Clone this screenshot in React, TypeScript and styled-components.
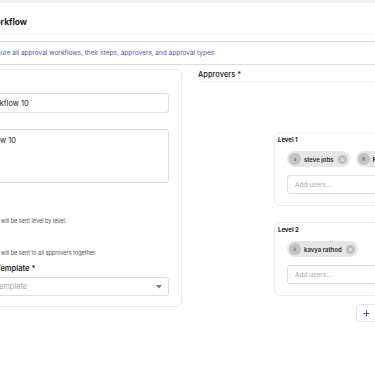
import styled, { createGlobalStyle } from "styled-components";

const GlobalStyle = createGlobalStyle`
  * { box-sizing: border-box; }
  html, body { margin: 0; padding: 0; background: #ffffff; }
  body {
    font-family: Inter, "Noto Sans", sans-serif;
    color: #1f1f1f;
  }
`;

// the screenshot only shows a slice of a wider page
const Viewport = styled.div`
  width: 375px;
  height: 366px;
  overflow: hidden;
`;

const Page = styled.div`
  width: 656px;
  margin-left: -76px;
`;

const TopStrip = styled.div`
  height: 3px;
  background: #f2f2f2;
`;

const Header = styled.header`
  display: flex;
  align-items: center;
  gap: 15px;
  padding: 14px 16px 6px;
  border-bottom: 1px solid #f0f0f0;
`;

const BackButton = styled.button`
  display: flex;
  width: 14px;
  height: 10px;
  padding: 0;
  border: none;
  background: none;
  color: #333;
`;

const Title = styled.h1`
  margin: 0;
  font-size: 8.5px;
  line-height: 10px;
  font-weight: 700;
  color: #1a1a1a;
`;

const Notice = styled.div`
  display: flex;
  align-items: center;
  gap: 14px;
  margin: 7px 0 0 16px;
  padding: 5px 14px;
  border-top: 1px solid #d6dcf0;
  border-bottom: 1px solid #d6dcf0;
  color: #4b58a8;
  font-size: 6.5px;
  line-height: 10px;
`;

const Main = styled.main`
  display: grid;
  grid-template-columns: 242px 366px;
  column-gap: 16px;
  align-items: start;
  padding: 4px 16px 0;
`;

const FormCard = styled.section`
  display: flex;
  flex-direction: column;
  gap: 3px;
  padding: 10px 12px 10px;
  border: 1px solid #e9e9e9;
  border-radius: 6px;
`;

const Field = styled.div`
  display: flex;
  flex-direction: column;
  gap: 4px;
`;

const Label = styled.label`
  font-size: 7.5px;
  line-height: 9px;
  font-weight: 600;
  color: #1f1f1f;
  white-space: nowrap;
`;

const TextInput = styled.div<{ $tall?: boolean }>`
  height: ${p => (p.$tall ? "54px" : "20px")};
  display: flex;
  align-items: ${p => (p.$tall ? "flex-start" : "center")};
  padding: ${p => (p.$tall ? "6px 7px" : "0 7px 0 10px")};
  border: 1px solid #dedede;
  border-radius: 3px;
  font-size: 7.5px;
  line-height: 9px;
  color: #222;
  white-space: nowrap;
`;

const RadioGroup = styled.div`
  display: flex;
  flex-direction: column;
  gap: 3px;
  margin-top: 1px;
`;

const Option = styled.div`
  padding: 4px 0;
`;

const OptionRow = styled.div`
  display: flex;
  align-items: center;
  gap: 4px;
  font-size: 6.5px;
  line-height: 9px;
  font-weight: 600;
`;

const Radio = styled.span<{ $checked?: boolean }>`
  width: 8px;
  height: 8px;
  border-radius: 50%;
  border: ${p => (p.$checked ? "2.5px solid #4f46e5" : "1px solid #bbb")};
`;

const OptionDesc = styled.div`
  margin-top: 4px;
  padding-left: 20px;
  font-size: 5.5px;
  line-height: 8px;
  color: #555;
  white-space: nowrap;
`;

const Select = styled.div`
  height: 19px;
  display: flex;
  align-items: center;
  justify-content: space-between;
  padding: 0 6px 0 12px;
  border: 1px solid #dedede;
  border-radius: 3px;
  font-size: 7.5px;
  color: #a8a8a8;
  white-space: nowrap;
`;

const ApproversColumn = styled.section`
  display: flex;
  flex-direction: column;
`;

const ColumnLabel = styled.div`
  font-size: 7.5px;
  line-height: 11px;
  font-weight: 500;
  color: #222;
  padding-bottom: 1px;
  border-bottom: 1px solid #f3f3f3;
`;

const LevelsArea = styled.div`
  display: flex;
  flex-direction: column;
  align-items: center;
  gap: 16px;
  padding-top: 50px;
`;

const LevelCard = styled.div`
  width: 214px;
  padding: 3px 0 11px 2px;
  border: 1px solid #ededed;
  border-radius: 6px;
`;

const LevelTitle = styled.div`
  margin-left: 1px;
  font-size: 6px;
  line-height: 8px;
  font-weight: 700;
  color: #1a1a1a;
`;

const LevelBody = styled.div`
  display: flex;
  flex-direction: column;
  gap: 8px;
  padding: 7px 10px 0;
`;

const Chips = styled.div`
  display: flex;
  gap: 6px;
  white-space: nowrap;
`;

const Chip = styled.div`
  display: flex;
  align-items: center;
  height: 16px;
  padding: 0 3px 0 2px;
  border-radius: 8px;
  background: #e6e6e6;
  font-size: 6px;
  font-weight: 600;
  color: #262626;
`;

const Avatar = styled.span`
  width: 12px;
  height: 12px;
  margin-right: 3px;
  border-radius: 50%;
  background: #c4c4c4;
  color: #6b6b6b;
  font-size: 5px;
  font-weight: 500;
  display: flex;
  align-items: center;
  justify-content: center;
`;

const RemoveIcon = styled.span`
  display: flex;
  margin-left: 4px;
`;

const AddUsers = styled.div`
  height: 19px;
  display: flex;
  align-items: center;
  padding: 0 7px;
  border: 1px solid #dedede;
  border-radius: 3px;
  font-size: 6.5px;
  color: #a6a6a6;
`;

const AddLevelButton = styled.button`
  align-self: flex-start;
  display: flex;
  align-items: center;
  gap: 8px;
  height: 18px;
  margin: -8px 0 0 158px;
  padding: 0 7px 0 6px;
  border: 1px solid #e4e4ee;
  border-radius: 4px;
  background: #fff;
  color: #4f46c8;
  font-family: inherit;
  font-size: 6.5px;
  font-weight: 500;
  white-space: nowrap;
`;

interface Approver {
  name: string;
}

const levels: { title: string; approvers: Approver[] }[] = [
  { title: "Level 1", approvers: [{ name: "steve jobs" }, { name: "Rahul sharma" }] },
  { title: "Level 2", approvers: [{ name: "kavya rathod" }] },
];

const RemoveGlyph = () => (
  <svg width="9" height="9" viewBox="0 0 9 9">
    <circle cx="4.5" cy="4.5" r="4.5" fill="#bdbdbd" />
    <path d="M3 3l3 3M6 3l-3 3" stroke="#fff" strokeWidth="0.9" strokeLinecap="round" />
  </svg>
);

const App = () => {
  return (
    <>
      <GlobalStyle />
      <Viewport>
        <Page>
          <TopStrip />
          <Header>
            <BackButton aria-label="back">
              <svg width="14" height="10" viewBox="0 0 14 10" fill="none">
                <path d="M13 5H1M5 1L1 5l4 4" stroke="currentColor" strokeWidth="1.2" strokeLinecap="round" />
              </svg>
            </BackButton>
            <Title>Edit Workflow</Title>
          </Header>
          <Notice>
            <svg width="12" height="12" viewBox="0 0 12 12" fill="none">
              <circle cx="6" cy="6" r="5" stroke="currentColor" />
              <path d="M6 5.5v3M6 3.6v.2" stroke="currentColor" strokeLinecap="round" />
            </svg>
            <span>Configure all approval workflows, their steps, approvers, and approval types.</span>
          </Notice>

          <Main>
            <FormCard>
              <Field>
                <Label>Name *</Label>
                <TextInput>Sales Workflow 10</TextInput>
              </Field>
              <Field>
                <Label>Notes</Label>
                <TextInput $tall>Finance flow 10</TextInput>
              </Field>
              <Field>
                <Label>Type *</Label>
                <RadioGroup>
                  <Option>
                    <OptionRow>
                      <Radio $checked />
                      Sequential
                    </OptionRow>
                    <OptionDesc>Approvals will be sent level by level.</OptionDesc>
                  </Option>
                  <Option>
                    <OptionRow>
                      <Radio />
                      Parallel
                    </OptionRow>
                    <OptionDesc>Approvals will be sent to all approvers together.</OptionDesc>
                  </Option>
                </RadioGroup>
              </Field>
              <Field>
                <Label>Reminder's Template *</Label>
                <Select>
                  <span>Select a template</span>
                  <svg width="6" height="4" viewBox="0 0 6 4">
                    <path d="M0 0h6L3 3.5z" fill="#7a7a7a" />
                  </svg>
                </Select>
              </Field>
            </FormCard>

            <ApproversColumn>
              <ColumnLabel>Approvers *</ColumnLabel>
              <LevelsArea>
                {levels.map(level => (
                  <LevelCard key={level.title}>
                    <LevelTitle>{level.title}</LevelTitle>
                    <LevelBody>
                      <Chips>
                        {level.approvers.map(a => (
                          <Chip key={a.name}>
                            <Avatar>{a.name[0]}</Avatar>
                            {a.name}
                            <RemoveIcon>
                              <RemoveGlyph />
                            </RemoveIcon>
                          </Chip>
                        ))}
                      </Chips>
                      <AddUsers>Add users...</AddUsers>
                    </LevelBody>
                  </LevelCard>
                ))}
                <AddLevelButton>
                  <svg width="7" height="7" viewBox="0 0 7 7">
                    <path d="M3.5 0.5v6M0.5 3.5h6" stroke="currentColor" strokeWidth="1" />
                  </svg>
                  Add Level
                </AddLevelButton>
              </LevelsArea>
            </ApproversColumn>
          </Main>
        </Page>
      </Viewport>
    </>
  );
};

export default App;
